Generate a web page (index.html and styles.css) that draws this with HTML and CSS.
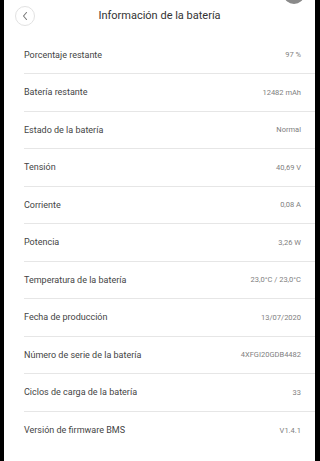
FILE: index.html
```html
<!DOCTYPE html>
<html lang="es">
<head>
<meta charset="utf-8">
<link rel="stylesheet" href="styles.css">
</head>
<body>
<div class="screen">
  <div class="top-dot"></div>
  <header class="header">
    <button class="back" aria-label="Atrás">
      <svg width="8" height="10" viewBox="0 0 8 10"><path d="M5.5 1.5 L2.5 5 L5.5 8.5" fill="none" stroke="#777" stroke-width="1.1" stroke-linecap="round" stroke-linejoin="round"/></svg>
    </button>
    <h1 class="title">Información de la batería</h1>
  </header>
  <ul class="list">
    <li class="row"><span class="label">Porcentaje restante</span><span class="value">97 %</span></li>
    <li class="row"><span class="label">Batería restante</span><span class="value">12482 mAh</span></li>
    <li class="row"><span class="label">Estado de la batería</span><span class="value">Normal</span></li>
    <li class="row"><span class="label">Tensión</span><span class="value">40,69 V</span></li>
    <li class="row"><span class="label">Corriente</span><span class="value">0,08 A</span></li>
    <li class="row"><span class="label">Potencia</span><span class="value">3,26 W</span></li>
    <li class="row"><span class="label">Temperatura de la batería</span><span class="value">23,0°C / 23,0°C</span></li>
    <li class="row"><span class="label">Fecha de producción</span><span class="value">13/07/2020</span></li>
    <li class="row"><span class="label">Número de serie de la batería</span><span class="value">4XFGI20GDB4482</span></li>
    <li class="row"><span class="label">Ciclos de carga de la batería</span><span class="value">33</span></li>
    <li class="row last"><span class="label">Versión de firmware BMS</span><span class="value">V1.4.1</span></li>
  </ul>
</div>
</body>
</html>
```
FILE: styles.css
```css
* { box-sizing: border-box; }
html, body {
  margin: 0;
  padding: 0;
  background: #000;
  height: 100%;
  overflow: hidden;
}
body {
  padding: 0 5px 0 4px;
  font-family: Roboto, "Liberation Sans", sans-serif;
}
.screen {
  position: relative;
  background: #fff;
  height: 461px;
}
.top-dot {
  position: absolute;
  left: 280px;
  top: -14px;
  width: 20px;
  height: 18px;
  border-radius: 50%;
  background: #8a8a8a;
}
.header {
  position: relative;
  height: 36.5px;
  display: flex;
  align-items: center;
  justify-content: center;
}
.back {
  position: absolute;
  left: 11px;
  top: 6px;
  width: 20px;
  height: 20px;
  border-radius: 50%;
  border: 1px solid #e2e2e2;
  background: #fff;
  padding: 0;
  display: flex;
  align-items: center;
  justify-content: center;
}
.title {
  margin: 0 0 5px 0;
  font-size: 11px;
  font-weight: 400;
  color: #333;
}
.list {
  list-style: none;
  margin: 0;
  padding: 0 0 0 20px;
}
.row {
  height: 37.5px;
  display: flex;
  align-items: center;
  justify-content: space-between;
  padding-right: 14px;
  border-bottom: 1px solid #e6e6e6;
}
.row.last { border-bottom: none; }
.label {
  font-size: 9px;
  color: #444;
}
.value {
  font-size: 7.5px;
  color: #808080;
}
```
